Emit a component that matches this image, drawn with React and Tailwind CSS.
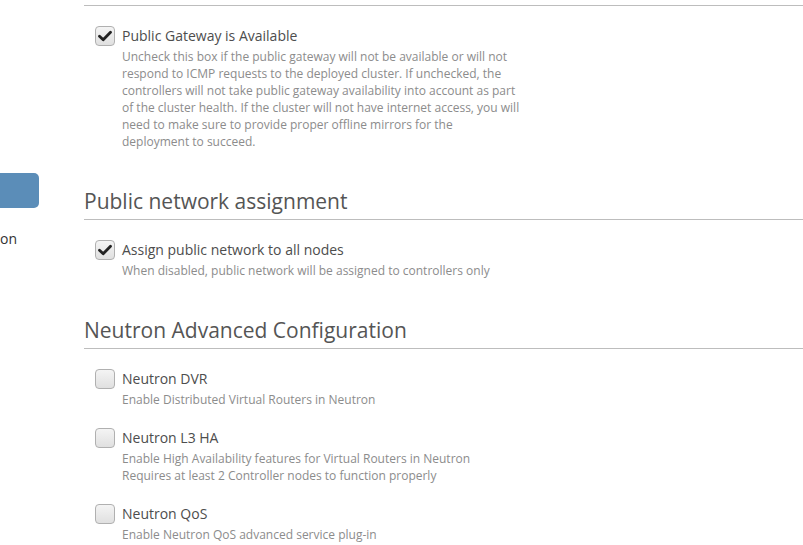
import React from "react";

function Box({ checked }) {
  return (
    <div className="flex h-[20px] w-[20px] shrink-0 items-center justify-center rounded-[4px] border border-[#b0b0b0] bg-gradient-to-b from-[#f4f4f4] to-[#e0e0e0]">
      {checked && (
        <svg width="14" height="12" viewBox="0 0 14 12">
          <path d="M1.5 6.2 L5.2 9.8 L12.5 2.2" fill="none" stroke="#222" strokeWidth="2.8" strokeLinecap="round" strokeLinejoin="round" />
        </svg>
      )}
    </div>
  );
}

function Item({ checked, label, desc }) {
  return (
    <div className="mt-[20px] flex pl-[11px]">
      <Box checked={checked} />
      <div className="ml-[7px]">
        <div className="text-[14px] leading-[20px] text-[#4d4d4d]">{label}</div>
        <div className="mt-[2px] w-[405px] text-[12px] leading-[17px] text-[#8c8c8c]">
          {desc.map((d, i) => (
            <div key={i}>{d}</div>
          ))}
        </div>
      </div>
    </div>
  );
}

function Heading({ children }) {
  return (
    <div className="mt-[37px] border-b border-[#bdbdbd] pb-[4px] text-[21px] leading-[28px] text-[#555]">
      {children}
    </div>
  );
}

export default function App() {
  return (
    <div className="flex h-[545px] w-[803px] overflow-hidden bg-white" style={{ fontFamily: '"Open Sans", sans-serif' }}>
      <div className="w-[84px] shrink-0">
        <div className="mt-[173px] h-[35px] w-[39px] rounded-r-[5px] bg-[#5b8db8]" />
        <div className="mt-[21px] text-[14px] leading-[20px] text-[#333]">on</div>
      </div>
      <div className="flex-1">
        <div className="h-[6px] border-b border-[#bdbdbd]" />
        <Item
          checked
          label="Public Gateway is Available"
          desc={[
            "Uncheck this box if the public gateway will not be available or will not",
            "respond to ICMP requests to the deployed cluster. If unchecked, the",
            "controllers will not take public gateway availability into account as part",
            "of the cluster health. If the cluster will not have internet access, you will",
            "need to make sure to provide proper offline mirrors for the",
            "deployment to succeed.",
          ]}
        />
        <Heading>Public network assignment</Heading>
        <Item
          checked
          label="Assign public network to all nodes"
          desc={["When disabled, public network will be assigned to controllers only"]}
        />
        <Heading>Neutron Advanced Configuration</Heading>
        <Item label="Neutron DVR" desc={["Enable Distributed Virtual Routers in Neutron"]} />
        <Item
          label="Neutron L3 HA"
          desc={[
            "Enable High Availability features for Virtual Routers in Neutron",
            "Requires at least 2 Controller nodes to function properly",
          ]}
        />
        <Item label="Neutron QoS" desc={["Enable Neutron QoS advanced service plug-in"]} />
      </div>
    </div>
  );
}
